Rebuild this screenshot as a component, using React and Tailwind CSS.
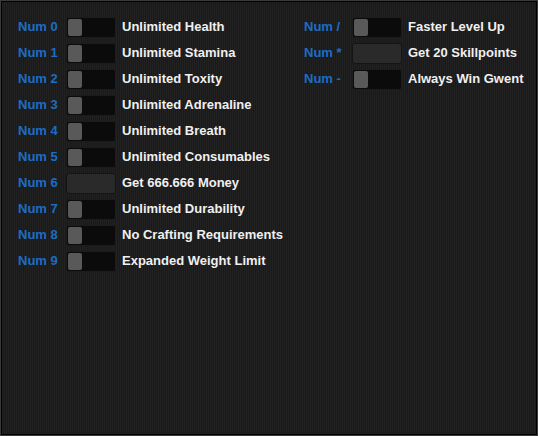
import { useState } from 'react';

const left = [
  ['Num 0', 'Unlimited Health', 'toggle'],
  ['Num 1', 'Unlimited Stamina', 'toggle'],
  ['Num 2', 'Unlimited Toxity', 'toggle'],
  ['Num 3', 'Unlimited Adrenaline', 'toggle'],
  ['Num 4', 'Unlimited Breath', 'toggle'],
  ['Num 5', 'Unlimited Consumables', 'toggle'],
  ['Num 6', 'Get 666.666 Money', 'button'],
  ['Num 7', 'Unlimited Durability', 'toggle'],
  ['Num 8', 'No Crafting Requirements', 'toggle'],
  ['Num 9', 'Expanded Weight Limit', 'toggle'],
];

const right = [
  ['Num /', 'Faster Level Up', 'toggle'],
  ['Num *', 'Get 20 Skillpoints', 'button'],
  ['Num -', 'Always Win Gwent', 'toggle'],
];

function Switch({ kind }) {
  const [on, setOn] = useState(false);
  if (kind === 'button') {
    return (
      <button className="h-[21px] w-[50px] shrink-0 rounded-[3px] border border-[#141414] bg-[#2a2a2a]" />
    );
  }
  return (
    <button
      onClick={() => setOn(!on)}
      className={`flex h-[21px] w-[50px] shrink-0 rounded-[3px] border border-[#1c1c1c] bg-[#0b0b0b] p-px ${on ? 'justify-end' : 'justify-start'}`}
    >
      <span className="h-full w-[14px] rounded-[2px] bg-[#595959]" />
    </button>
  );
}

function Row({ keyName, label, kind }) {
  return (
    <div className="flex h-[26px] items-center">
      <span className="w-[48px] shrink-0 text-[13px] font-bold text-[#1a6dc6]">{keyName}</span>
      <Switch kind={kind} />
      <span className="ml-[6px] whitespace-nowrap text-[13px] font-bold text-[#f0f0f0]">{label}</span>
    </div>
  );
}

export default function App() {
  return (
    <div className="h-[436px] w-[538px] border border-[#3a3a3a] bg-[#1d1d1d] bg-[repeating-linear-gradient(90deg,#1a1a1a_0px,#1a1a1a_1px,#212121_1px,#212121_2px)] font-['Liberation_Sans',Arial,sans-serif]">
      <div className="flex h-full w-full border border-black pl-[16px] pt-[12px]">
        <div className="flex w-[286px] shrink-0 flex-col">
          {left.map(([k, l, t]) => (
            <Row key={k} keyName={k} label={l} kind={t} />
          ))}
        </div>
        <div className="flex flex-col">
          {right.map(([k, l, t]) => (
            <Row key={k} keyName={k} label={l} kind={t} />
          ))}
        </div>
      </div>
    </div>
  );
}
